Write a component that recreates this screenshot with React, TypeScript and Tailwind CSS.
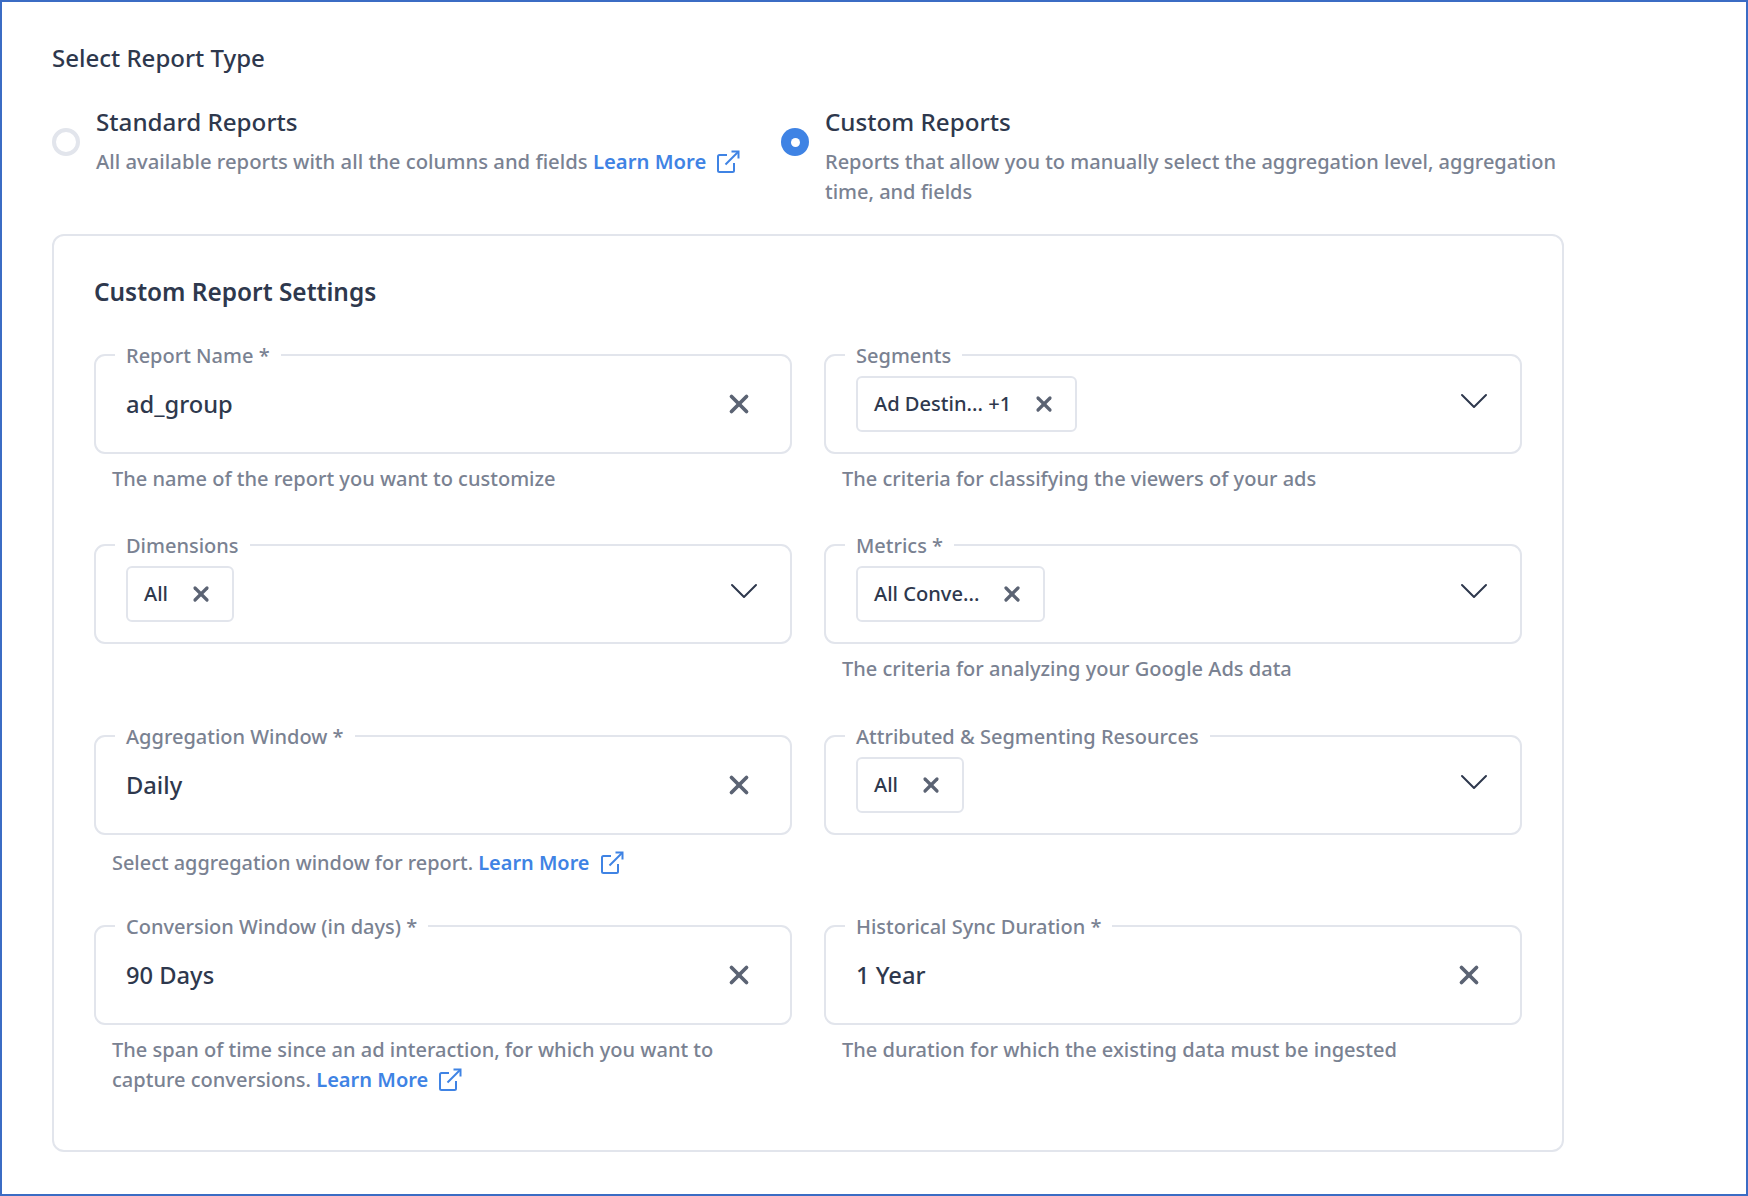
import { ChevronDown, X } from 'lucide-react';
import type { ReactNode } from 'react';

const LinkIcon = () => (
  <svg width="24" height="24" viewBox="0 0 24 24" fill="none" stroke="#3f83e4" strokeWidth="2" className="inline-block align-[-5px] ml-2.5">
    <path d="M11 5H3.5a1.5 1.5 0 0 0-1.5 1.5v14A1.5 1.5 0 0 0 3.5 22h13a1.5 1.5 0 0 0 1.5-1.5V13" />
    <path d="M9.5 14.5 22 2" />
    <path d="M15.5 1.5H22.5V8.5" />
  </svg>
);

const LearnMore = () => (
  <>
    <a className="font-semibold text-[#3f83e4]">Learn More</a>
    <LinkIcon />
  </>
);

type FieldProps = {
  label: string;
  value?: string;
  chip?: string;
  hint?: ReactNode;
};

const Field = ({ label, value, chip, hint }: FieldProps) => (
  <div className="h-[190.3px]">
    <div className="relative h-[100px] border-2 border-[#e2e5ec] rounded-[11px] pl-[30px] pr-[30px] flex items-center justify-between">
      <span className="absolute left-[19px] -top-[12px] bg-white px-[11px] text-[20px] font-medium leading-[24px] text-[#7a8292]">{label}</span>
      {value && <span className="text-[23.7px] font-medium leading-8 text-[#2e384d]">{value}</span>}
      {chip && (
        <div className="h-[56px] border-2 border-[#e2e5ec] rounded-[6px] pl-[16px] pr-[19px] flex items-center gap-[21px] text-[20.1px] font-medium text-[#2e384d]">
          {chip}
          <X size={24} strokeWidth={3.2} className="text-[#5b6373]" />
        </div>
      )}
      {value ? (
        <X size={30} strokeWidth={3} className="text-[#5b6373] mr-[6px]" />
      ) : (
        <ChevronDown size={48} strokeWidth={1} className="text-[#2e384d] -mr-[8px] -mt-[6px]" />
      )}
    </div>
    {hint && <p className="pl-[18px] pr-[40px] mt-[10px] text-[20.05px] font-medium leading-[30px] text-[#7a8292]">{hint}</p>}
  </div>
);

export default function App() {
  return (
    <div className="w-[1748px] h-[1196px] border-2 border-[#3b6cc4] bg-white pl-[50px] pt-[40px] font-['Noto_Sans',sans-serif]">
      <h2 className="text-[24px] leading-8 font-medium text-[#2e384d]">Select Report Type</h2>

      <div className="mt-[32px] flex">
        <div className="w-[729px] flex gap-[16px]">
          <div className="mt-[22px] w-[28px] h-[28px] rounded-full border-[4px] border-[#e2e5ec]" />
          <div>
            <div className="text-[24.2px] leading-8 font-medium text-[#2e384d]">Standard Reports</div>
            <p className="mt-[8px] text-[20.27px] font-medium leading-[30px] text-[#7a8292]">
              All available reports with all the columns and fields <LearnMore />
            </p>
          </div>
        </div>
        <div className="flex gap-[16px]">
          <div className="mt-[22px] w-[28px] h-[28px] rounded-full bg-[#3f83e4] flex items-center justify-center">
            <div className="w-[9px] h-[9px] rounded-full bg-white" />
          </div>
          <div className="w-[740px]">
            <div className="text-[24.2px] leading-8 font-medium text-[#2e384d]">Custom Reports</div>
            <p className="mt-[9px] text-[20px] font-medium leading-[30px] text-[#7a8292]">
              Reports that allow you to manually select the aggregation level, aggregation time, and fields
            </p>
          </div>
        </div>
      </div>

      <div className="mt-[27px] w-[1512px] h-[918px] border-2 border-[#e2e5ec] rounded-[12px] px-[40px] pt-[40px]">
        <h3 className="text-[24.4px] leading-8 font-semibold text-[#2e384d]">Custom Report Settings</h3>
        <div className="mt-[46px] grid grid-cols-[698px_698px] gap-x-[32px]">
          <Field label="Report Name *" value="ad_group" hint="The name of the report you want to customize" />
          <Field label="Segments" chip="Ad Destin... +1" hint="The criteria for classifying the viewers of your ads" />
          <Field label="Dimensions" chip="All" />
          <Field label="Metrics *" chip="All Conve..." hint="The criteria for analyzing your Google Ads data" />
          <Field
            label="Aggregation Window *"
            value="Daily"
            hint={
              <span className="block pt-[3px] text-[19.9px]">
                Select aggregation window for report. <LearnMore />
              </span>
            }
          />
          <Field label="Attributed & Segmenting Resources" chip="All" />
          <Field
            label="Conversion Window (in days) *"
            value="90 Days"
            hint={
              <>
                The span of time since an ad interaction, for which you want to capture conversions. <LearnMore />
              </>
            }
          />
          <Field label="Historical Sync Duration *" value="1 Year" hint="The duration for which the existing data must be ingested" />
        </div>
      </div>
    </div>
  );
}
